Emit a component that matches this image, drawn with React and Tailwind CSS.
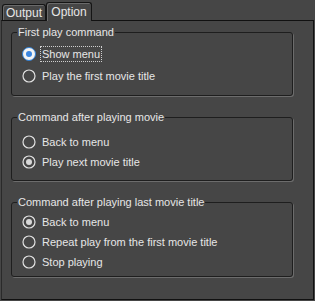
import React from 'react';

const groups = [
  {
    title: 'First play command',
    pad: 'pt-[5px] pb-[9px]',
    gap: 'gap-[2px]',
    options: [
      { label: 'Show menu', state: 'focus' },
      { label: 'Play the first movie title', state: 'off' },
    ],
  },
  {
    title: 'Command after playing movie',
    pad: 'pt-[8px] pb-[8px]',
    gap: 'gap-0',
    options: [
      { label: 'Back to menu', state: 'off' },
      { label: 'Play next movie title', state: 'on' },
    ],
  },
  {
    title: 'Command after playing last movie title',
    pad: 'pt-[3px] pb-[4px]',
    gap: 'gap-0',
    options: [
      { label: 'Back to menu', state: 'on' },
      { label: 'Repeat play from the first movie title', state: 'off' },
      { label: 'Stop playing', state: 'off' },
    ],
  },
];

const Radio = ({ state }) => {
  if (state === 'focus') {
    return (
      <svg width="14" height="14" viewBox="0 0 14 14" className="shrink-0">
        <circle cx="7" cy="7" r="6.5" fill="#f4f4f4" stroke="#2f7fd6" />
        <circle cx="7" cy="7" r="3" fill="#3b86e0" />
      </svg>
    );
  }
  return (
    <svg width="14" height="14" viewBox="0 0 14 14" className="shrink-0">
      <circle cx="7" cy="7" r="6" fill="#464646" stroke="#e2e2e2" strokeWidth="1.2" />
      {state === 'on' && <circle cx="7" cy="7" r="3" fill="#d8d8d8" />}
    </svg>
  );
};

const App = () => {
  return (
    <div className="w-[315px] h-[301px] bg-[#464646] text-[11px] text-[#e6e6e6] font-['Liberation_Sans',Arial,sans-serif] leading-[14px] flex flex-col overflow-hidden">
      {/* tabs */}
      <div className="flex items-end h-[20px] pl-[2px] relative z-10">
        <div className="h-[16px] w-[44px] border border-b-0 border-[#151515] rounded-t-[3px] shadow-[inset_1px_1px_0_#6a6a6a] flex items-center justify-center text-[12px]">
          Output
        </div>
        <div className="h-[19px] w-[46px] border border-b-0 border-[#151515] rounded-t-[3px] shadow-[inset_1px_1px_0_#6a6a6a] bg-[#464646] flex items-center justify-center -mb-[1px] text-[12px]">
          Option
        </div>
      </div>

      {/* panel */}
      <div className="flex-1 mx-[1px] mb-[1px] border border-t-[#111] border-l-[#2a2a2a] border-r-[#111] border-b-[#111] pl-[9px] pr-[20px] pt-[4px] flex flex-col gap-[14px]">
        {groups.map((g) => (
          <fieldset
            key={g.title}
            className={`border border-[#1e1e1e] rounded-[3px] shadow-[1px_1px_0_#6c6c6c] pl-[10px] ${g.pad}`}
          >
            <legend className="px-[1px] -ml-[5px] leading-[14px]">{g.title}</legend>
            <div className={`flex flex-col ${g.gap}`}>
              {g.options.map((o) => (
                <div key={o.label} className="flex items-center h-[20px] gap-[5px]">
                  <Radio state={o.state} />
                  <span
                    className={
                      o.state === 'focus'
                        ? 'outline outline-1 outline-dotted outline-[#cfcfcf] px-[1px]'
                        : 'px-[1px]'
                    }
                  >
                    {o.label}
                  </span>
                </div>
              ))}
            </div>
          </fieldset>
        ))}
      </div>
    </div>
  );
};

export default App;
